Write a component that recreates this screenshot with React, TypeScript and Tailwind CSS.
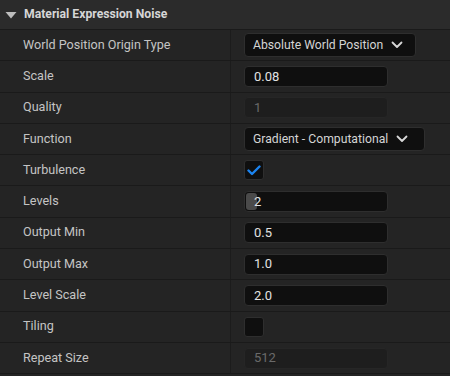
import React from "react";

const Chevron = () => (
  <svg width="12" height="8" viewBox="0 0 12 8" className="ml-[8px]">
    <path d="M1.5 1.5 L6 6 L10.5 1.5" fill="none" stroke="#d8d8d8" strokeWidth="1.8" strokeLinecap="round" strokeLinejoin="round" />
  </svg>
);

const Row = ({ label, children }: { label: string; children?: React.ReactNode }) => (
  <div className="flex h-[31.3px] border-b border-[#1a1a1a] bg-[#242424]">
    <div className="flex w-[231px] items-center border-r border-[#1c1c1c] pl-[23px] text-[12.6px] text-[#c4c4c4]">
      {label}
    </div>
    <div className="flex flex-1 items-center pl-[13px]">{children}</div>
  </div>
);

const Input = ({ value, disabled }: { value: string; disabled?: boolean }) => (
  <div
    className={
      "flex h-[21px] w-[144px] items-center rounded-[4px] border pl-[9px] text-[13px] " +
      (disabled
        ? "border-[#262626] bg-[#1e1e1e] text-[#6a6a6a]"
        : "border-[#2e2e2e] bg-[#0f0f0f] text-[#e2e2e2]")
    }
  >
    {value}
  </div>
);

const Dropdown = ({ value, width }: { value: string; width: string }) => (
  <div
    className={
      "flex h-[24px] items-center rounded-[4px] border border-[#2e2e2e] bg-[#0f0f0f] pl-[8px] text-[12.2px] text-[#d4d4d4] " +
      width
    }
  >
    {value}
    <Chevron />
  </div>
);

export default function App() {
  return (
    <div
      className="h-[376px] w-[450px] overflow-hidden bg-[#242424]"
      style={{ fontFamily: "Roboto, 'Noto Sans', sans-serif" }}
    >
      <div className="flex h-[30px] items-center border-b border-[#1a1a1a] bg-[#2b2b2b]">
        <svg width="12" height="8" viewBox="0 0 12 8" className="ml-[5px]">
          <path d="M0.5 1 L11.5 1 L6 7.5 Z" fill="#bdbdbd" />
        </svg>
        <span className="ml-[7px] text-[12.2px] font-bold text-[#d6d6d6]">Material Expression Noise</span>
      </div>
      <Row label="World Position Origin Type">
        <Dropdown value="Absolute World Position" width="w-[172px]" />
      </Row>
      <Row label="Scale">
        <Input value="0.08" />
      </Row>
      <Row label="Quality">
        <Input value="1" disabled />
      </Row>
      <Row label="Function">
        <Dropdown value="Gradient - Computational" width="w-[181px]" />
      </Row>
      <Row label="Turbulence">
        <div className="flex h-[20px] w-[20px] items-center justify-center rounded-[3px] border border-[#2e2e2e] bg-[#0f0f0f]">
          <svg width="14" height="11" viewBox="0 0 14 11">
            <path d="M1.5 5.5 L5 9 L12.5 1.5" fill="none" stroke="#1b84f0" strokeWidth="2.4" strokeLinecap="round" strokeLinejoin="round" />
          </svg>
        </div>
      </Row>
      <Row label="Levels">
        <div className="relative flex h-[21px] w-[144px] items-center rounded-[4px] border border-[#2e2e2e] bg-[#0f0f0f] pl-[9px] text-[13px] text-[#e2e2e2]">
          <div className="absolute left-[1px] top-[1px] h-[17px] w-[11px] rounded-[3px] bg-[#4a4a4a]" />
          <span className="relative">2</span>
        </div>
      </Row>
      <Row label="Output Min">
        <Input value="0.5" />
      </Row>
      <Row label="Output Max">
        <Input value="1.0" />
      </Row>
      <Row label="Level Scale">
        <Input value="2.0" />
      </Row>
      <Row label="Tiling">
        <div className="h-[20px] w-[20px] rounded-[3px] border border-[#2e2e2e] bg-[#0f0f0f]" />
      </Row>
      <Row label="Repeat Size">
        <Input value="512" disabled />
      </Row>
    </div>
  );
}
